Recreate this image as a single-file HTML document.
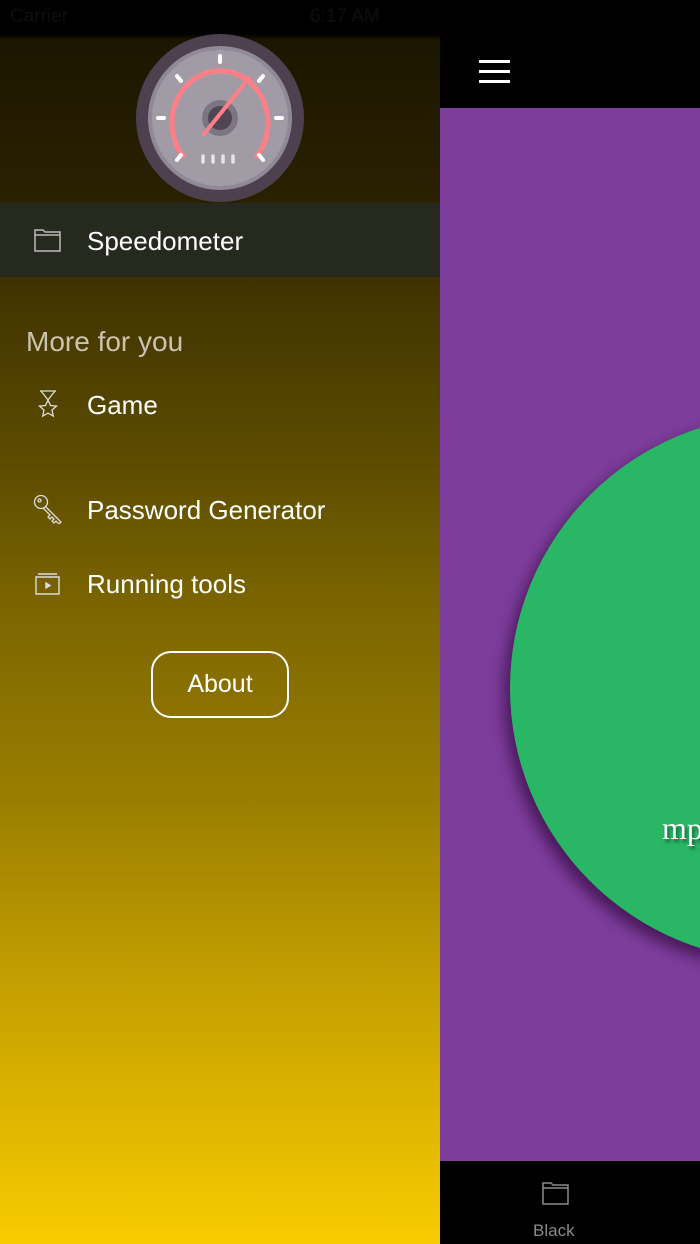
<!DOCTYPE html>
<html><head><meta charset="utf-8"><style>
*{margin:0;padding:0;box-sizing:border-box}
body{width:700px;height:1244px;overflow:hidden;background:#000;position:relative;font-family:"Liberation Sans",sans-serif}
#left{position:absolute;left:0;top:0;width:440px;height:1244px;background:linear-gradient(180deg,#000 0,#000 34px,#1b1600 40px,#2a2100 200px,#433600 300px,#5a4a00 450px,#7a6400 600px,#9a7e00 800px,#c7a200 1000px,#f8cb00 1244px)}
#status{position:absolute;left:0;top:0;width:700px;height:34px;background:#000;color:#0e0e0e;font-size:19px}
.row{position:absolute;left:0;width:440px;color:#fff;font-size:26px}
#right{position:absolute;left:440px;top:0;width:260px;height:1244px;background:#000;overflow:hidden}
#purple{position:absolute;left:0;top:108px;width:260px;height:1053px;background:#7d3d9b;overflow:hidden}
#circle{position:absolute;left:70px;top:307px;width:546px;height:546px;border-radius:50%;background:#29b765;box-shadow:-6px 8px 14px rgba(40,0,50,.6)}
</style></head><body>
<div id="left"></div>
<div id="status"><span style="position:absolute;left:10px;top:6px">Carrier</span><span style="position:absolute;left:310px;top:6px">6:17 AM</span></div>
<svg style="position:absolute;left:130px;top:30px" width="180" height="180" viewBox="0 0 180 180">
<ellipse cx="90" cy="88" rx="84" ry="84" fill="#4d4150"/>
<ellipse cx="90" cy="88" rx="72" ry="72" fill="#8f8a95"/>
<ellipse cx="90" cy="88" rx="68" ry="68" fill="#a09ba5"/>
<path d="M53 126 A48 52 0 1 1 127 126" fill="none" stroke="#ff7f88" stroke-width="5" stroke-linecap="round"/>
<g stroke="#fff" stroke-width="4" stroke-linecap="round"><line x1="90" y1="26" x2="90" y2="32"/><line x1="47" y1="46" x2="51" y2="51"/><line x1="133" y1="46" x2="129" y2="51"/><line x1="28" y1="88" x2="34" y2="88"/><line x1="146" y1="88" x2="152" y2="88"/><line x1="47" y1="130" x2="51" y2="125"/><line x1="133" y1="130" x2="129" y2="125"/></g>
<ellipse cx="90" cy="88" rx="18" ry="18" fill="#7c7682"/><ellipse cx="90" cy="88" rx="12" ry="12" fill="#4f4553"/>
<line x1="74" y1="104" x2="119" y2="48" stroke="#ff7f88" stroke-width="4" stroke-linecap="round"/>
<g stroke="#e6e3e8" stroke-width="3.5" stroke-linecap="round"><line x1="73" y1="126" x2="73" y2="132"/><line x1="83" y1="126" x2="83" y2="132"/><line x1="93" y1="126" x2="93" y2="132"/><line x1="103" y1="126" x2="103" y2="132"/></g>
</svg>
<div class="row" style="top:203px;height:74px;background:#262a1e"></div>
<svg style="position:absolute;left:34px;top:228px" width="28" height="24" viewBox="0 0 28 24" fill="none" stroke="#bbb" stroke-width="1.5"><path d="M1 2h8l2 2h15v19H1z M1 7h25"/></svg>
<div class="row" style="top:226px;left:87px">Speedometer</div>
<div class="row" style="top:326px;left:26px;color:#c9c3b0;font-size:28px">More for you</div>
<svg style="position:absolute;left:36px;top:390px" width="24" height="30" viewBox="0 0 24 30" fill="none" stroke="#ddd" stroke-width="1.3"><path d="M4 1h16M5 1l7 9 7-9M12 10l2.5 5.5 6 .6-4.5 4 1.3 6-5.3-3-5.3 3 1.3-6-4.5-4 6-.6z"/></svg>
<div class="row" style="top:390px;left:87px">Game</div>
<svg style="position:absolute;left:33px;top:494px" width="30" height="30" viewBox="0 0 30 30" fill="none" stroke="#ddd" stroke-width="1.3"><circle cx="8" cy="8" r="6.5"/><circle cx="6.5" cy="6.5" r="1.5"/><path d="M12 12l16 16-2 2-3-3-2 2-2-2 2-2-2-2-2 2-2-2 2-2-7-7"/></svg>
<div class="row" style="top:495px;left:87px">Password Generator</div>
<svg style="position:absolute;left:34px;top:572px" width="28" height="24" viewBox="0 0 28 24" fill="none" stroke="#ddd" stroke-width="1.4"><path d="M4 2h19M2 5h23v17H2z"/><path d="M12 11l4 2.5-4 2.5z" fill="#ddd"/></svg>
<div class="row" style="top:569px;left:87px">Running tools</div>
<div style="position:absolute;left:151px;top:651px;width:138px;height:67px;border:2px solid #fff;border-radius:20px;color:#fff;font-size:25px;text-align:center;line-height:63px">About</div>
<div id="right">
<div style="position:absolute;left:39px;top:60px;width:31px;height:3px;background:#fff;box-shadow:0 10px #fff,0 20px #fff"></div>
<div id="purple"><div id="circle"></div>
<div style="position:absolute;left:222px;top:702px;color:#fff;font-family:'Liberation Serif',serif;font-size:32px;text-shadow:2px 3px 3px rgba(0,0,0,.5)">mph</div></div>
<svg style="position:absolute;left:102px;top:1181px" width="28" height="24" viewBox="0 0 28 24" fill="none" stroke="#8a8a8a" stroke-width="1.5"><path d="M1 2h8l2 2h15v19H1z M1 7h25"/></svg>
<div style="position:absolute;left:93px;top:1221px;color:#8a8a8a;font-size:17px">Black</div>
</div>
</body></html>
